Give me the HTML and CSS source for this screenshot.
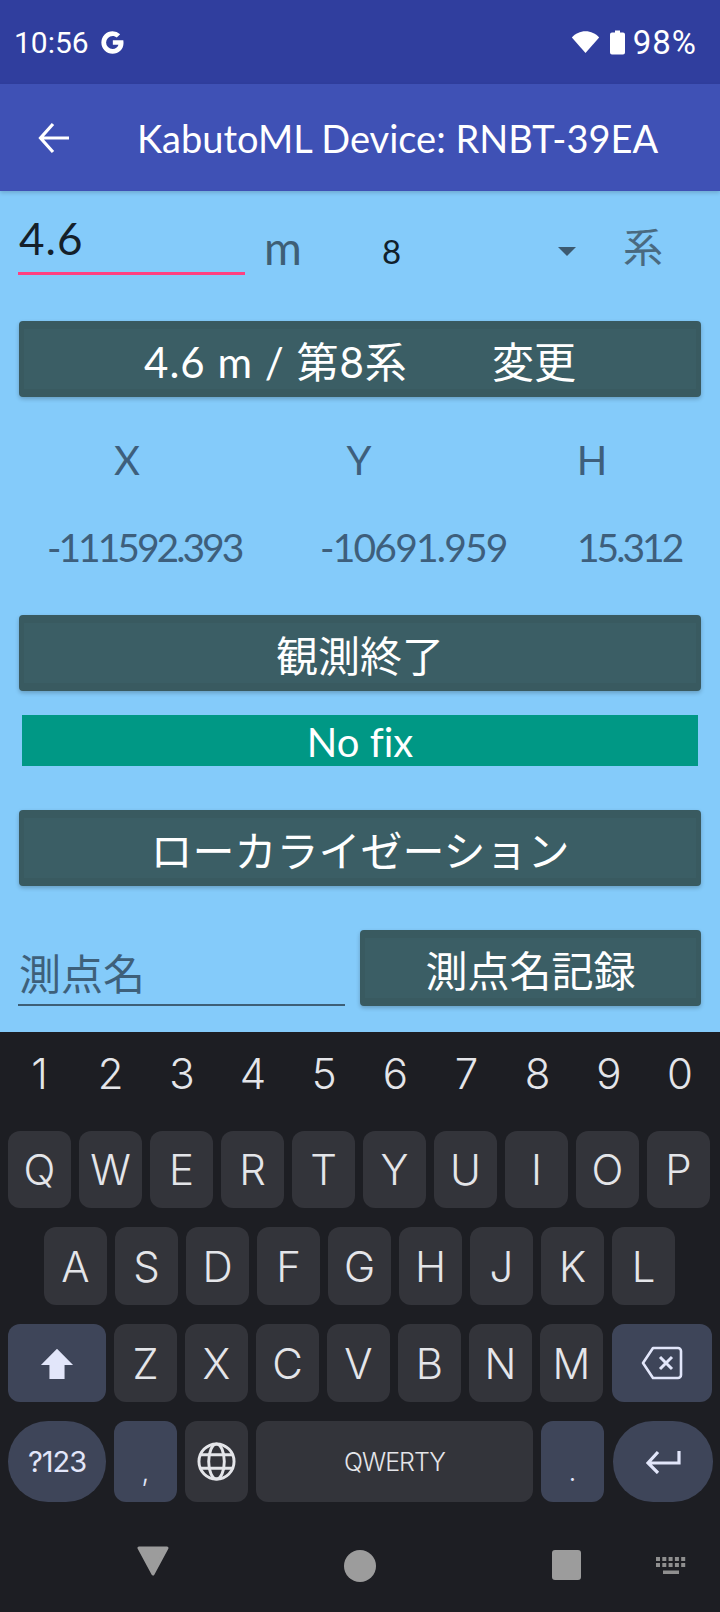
FILE: index.html
```html
<!DOCTYPE html>
<html lang="ja">
<head>
<meta charset="utf-8">
<title>KabutoML Device</title>
<link rel="stylesheet" href="styles.css">
</head>
<body>
<div class="screen">
  <header class="status">
    <div class="status-left">
      <span class="time">10:56</span>
      <svg class="g-icon" viewBox="0 0 24 24"><path d="M21.600 10H12.300v4.100h5c-.6 2.300-2.700 3.700-5.200 3.700a5.800 5.800 0 0 1 0-11.600c1.400 0 2.700.500 3.700 1.400l3-3A10 10 0 0 0 12.100 2a10 10 0 1 0 0 20c5.400 0 9.700-3.700 9.700-9.500 0-.9-.1-1.700-.2-2.500z" fill="#fff"/></svg>
    </div>
    <div class="status-right">
      <svg class="wifi" viewBox="0 0 30 24"><path d="M15 23.500 .9 7.300C4.500 3.500 9.500 1 15 1s10.500 2.500 14.100 6.300z" fill="#fff"/></svg>
      <svg class="battery" viewBox="0 0 15 24"><path d="M5 0h5v2h3a2 2 0 0 1 2 2v18a2 2 0 0 1-2 2H2a2 2 0 0 1-2-2V4a2 2 0 0 1 2-2h3z" fill="#fff"/></svg>
      <span class="pct">98%</span>
    </div>
  </header>
  <div class="appbar">
    <svg class="back" viewBox="0 0 32 32"><path d="M32 16H4M16 2 3.500 16 16 30" fill="none" stroke="#fff" stroke-width="3.200"/></svg>
    <h1 class="title">KabutoML Device: RNBT-39EA</h1>
  </div>
  <main class="content">
    <div class="settings">
      <div class="num-input">4.6</div>
      <span class="unit">m</span>
      <div class="spinner"><span class="spin-val">8</span><span class="caret"></span></div>
      <span class="kei">系</span>
    </div>
    <button class="btn btn-first"><span class="spaced">4.6 m / 第8系</span><span class="change">変更</span></button>
    <div class="coords head">
      <span class="c1">X</span><span class="c2">Y</span><span class="c3">H</span>
    </div>
    <div class="coords vals">
      <span class="c1">-111592.393</span><span class="c2">-10691.959</span><span class="c3">15.312</span>
    </div>
    <button class="btn btn-stop">観測終了</button>
    <div class="fix">No fix</div>
    <button class="btn btn-loc">ローカライゼーション</button>
    <div class="point-row">
      <div class="point-input">測点名</div>
      <button class="btn btn-rec">測点名記録</button>
    </div>
  </main>
  <section class="kbd">
    <div class="nums">
      <span>1</span><span>2</span><span>3</span><span>4</span><span>5</span><span>6</span><span>7</span><span>8</span><span>9</span><span>0</span>
    </div>
    <div class="row row-q">
      <span class="key">Q</span><span class="key">W</span><span class="key">E</span><span class="key">R</span><span class="key">T</span><span class="key">Y</span><span class="key">U</span><span class="key">I</span><span class="key">O</span><span class="key">P</span>
    </div>
    <div class="row row-a">
      <span class="key">A</span><span class="key">S</span><span class="key">D</span><span class="key">F</span><span class="key">G</span><span class="key">H</span><span class="key">J</span><span class="key">K</span><span class="key">L</span>
    </div>
    <div class="row row-z">
      <span class="key wide fn"><svg class="ico shift" viewBox="0 0 36 36"><path d="M18 3 35 20H26V35H10V20H1z" fill="#e2e6fa"/></svg></span>
      <span class="key">Z</span><span class="key">X</span><span class="key">C</span><span class="key">V</span><span class="key">B</span><span class="key">N</span><span class="key">M</span>
      <span class="key wide fn"><svg class="ico del" viewBox="0 0 42 34"><path d="M12 2H37a3 3 0 0 1 3 3V29a3 3 0 0 1-3 3H12L2 17z" fill="none" stroke="#e2e6fa" stroke-width="2.600" stroke-linejoin="round"/><path d="M19 11 31 23M31 11 19 23" stroke="#e2e6fa" stroke-width="3"/></svg></span>
    </div>
    <div class="row row-b">
      <span class="key wide fn pill sym">?123</span>
      <span class="key fn punct">,</span>
      <span class="key"><svg class="ico globe" viewBox="0 0 40 40"><g fill="none" stroke="#e4e5e9" stroke-width="3"><circle cx="20" cy="20" r="18"/><ellipse cx="20" cy="20" rx="8" ry="18"/><path d="M3.500 13h33M3.500 27h33"/></g></svg></span>
      <span class="key space">QWERTY</span>
      <span class="key fn punct">.</span>
      <span class="key wide fn pill"><svg class="ico enter" viewBox="0 0 38 24"><path d="M35 1V13H5M14 2 4 13 14 23" fill="none" stroke="#e2e6fa" stroke-width="3.200"/></svg></span>
    </div>
    <nav class="navbar">
      <svg class="nav-back" viewBox="0 0 32 30"><path d="M2 2H30L16 28z" fill="#9c9c9c" stroke="#9c9c9c" stroke-width="3" stroke-linejoin="round"/></svg>
      <span class="nav-home"></span>
      <span class="nav-recent"></span>
      <svg class="nav-kbd" viewBox="0 0 30 17"><g fill="#8f8f8f"><rect x="0" y="0" width="4" height="4"/><rect x="6.300" y="0" width="4" height="4"/><rect x="12.600" y="0" width="4" height="4"/><rect x="18.900" y="0" width="4" height="4"/><rect x="25.200" y="0" width="4" height="4"/><rect x="0" y="6" width="4" height="4"/><rect x="6.300" y="6" width="4" height="4"/><rect x="12.600" y="6" width="4" height="4"/><rect x="18.900" y="6" width="4" height="4"/><rect x="25.200" y="6" width="4" height="4"/><rect x="7" y="13.500" width="16" height="3.500"/></g></svg>
    </nav>
  </section>
</div>
</body>
</html>
```
FILE: styles.css
```css
* { box-sizing: border-box; }
html, body { margin: 0; padding: 0; }
body {
  width: 720px; height: 1612px; overflow: hidden;
  font-family: "Lato", "Noto Sans CJK JP", sans-serif;
  font-variant-ligatures: none;
}
.screen { width: 720px; height: 1612px; display: flex; flex-direction: column; background: #84cbfa; }

.status { height: 84px; flex: none; background: #303e9e; color: #fff; display: flex; justify-content: space-between; align-items: center; padding: 0 23px 0 14px; font-family: "Roboto", sans-serif; font-size: 30px; }
.status-left, .status-right { display: flex; align-items: center; }
.g-icon { width: 27px; height: 27px; margin-left: 10px; }
.wifi { width: 29px; height: 24px; }
.battery { width: 15px; height: 25px; margin-left: 10px; }
.pct { margin-left: 8px; font-size: 33px; letter-spacing: 1px; }

.appbar { height: 107px; flex: none; background: #3f51b5; display: flex; align-items: center; padding-left: 37px; box-shadow: 0 2px 4px rgba(0,0,0,.16); position: relative; }
.back { width: 32px; height: 32px; }
.title { margin: 0 0 0 68px; font-size: 38px; font-weight: 400; color: #fff; white-space: nowrap; }

.content { height: 841px; flex: none; padding: 0 19px; display: flex; flex-direction: column; }
.settings { height: 130px; flex: none; display: flex; align-items: flex-start; margin-left: -1px; }
.num-input { width: 227px; height: 84px; border-bottom: 3px solid #ff4081; font-size: 44px; letter-spacing: 1px; color: #14202a; padding: 22px 0 0 1px; line-height: 50px; }
.unit { font-size: 46px; color: #3e5f76; width: 73px; padding: 32px 0 0 19px; line-height: 50px; }
.spinner { width: 258px; height: 84px; display: flex; align-items: center; justify-content: space-between; padding: 36px 0 0 64px; }
.spin-val { font-size: 33px; color: #10202b; }
.caret { width: 0; height: 0; border-left: 9.500px solid transparent; border-right: 9.500px solid transparent; border-top: 9px solid #3c5a70; }
.kei { font-size: 40px; color: #4a6a80; margin-left: 47px; padding-top: 31px; line-height: 50px; }

.btn { display: flex; align-items: center; justify-content: center; width: 682px; height: 76px; flex: none; padding: 0; border-style: solid; border-width: 8px 5px; border-color: #395a60; border-radius: 4px; background: #3b5e65; color: #fff; font-family: inherit; font-size: 42px; box-shadow: 0 2px 4px rgba(0,0,0,.22); }
.spaced { letter-spacing: 1px; }
.change { margin-left: 84px; }
.coords { display: flex; flex: none; color: #3e5f7c; }
.coords span { display: block; text-align: center; }
.head { margin-top: 23px; height: 80px; font-size: 40px; line-height: 80px; }
.head .c1 { width: 216px; }
.head .c2 { width: 248px; }
.head .c3 { width: 218px; }
.vals { height: 113px; font-size: 39px; line-height: 94px; letter-spacing: -3px; }
.vals .c1 { width: 301px; padding-left: 28px; text-align: left; }
.vals .c2 { width: 257px; text-align: left; letter-spacing: -1.800px; }
.vals .c3 { width: 124px; text-align: left; }
.btn-stop { margin-top: 2px; }
.fix { width: 676px; height: 51px; flex: none; margin: 24px 0 0 3px; background: #009885; color: #fff; font-size: 40px; line-height: 54px; text-align: center; }
.btn-loc { margin-top: 44px; }
.point-row { display: flex; justify-content: space-between; align-items: flex-end; margin-top: 44px; margin-left: -1px; width: 683px; }
.point-input { width: 327px; height: 76px; border-bottom: 2px solid #3e5f76; color: #3e607a; font-size: 42px; line-height: 48px; padding: 20px 0 0 1px; }
.btn-rec { width: 341px; }

.kbd { flex: 1; background: #1d1e23; display: flex; flex-direction: column; font-family: "Inter", sans-serif; color: #e4e5e9; }
.nums { height: 99px; flex: none; padding: 0 4.500px 0 4px; display: flex; }
.nums span { flex: 1; text-align: center; font-size: 42px; font-weight: 300; line-height: 84px; }
.row { display: flex; gap: 8px; flex: none; padding: 0 8px; }
.key { width: 63px; height: 77px; flex: none; background: #33343a; border-radius: 12px; display: flex; align-items: center; justify-content: center; font-size: 42px; font-weight: 300; }
.row-q { gap: 8px; margin-bottom: 19px; }
.row-a { padding-left: 44px; margin-bottom: 19px; height: 78px; }
.row-a .key { height: 78px; }
.row-z { margin-bottom: 19px; height: 78px; }
.row-z .key { height: 78px; }
.row-b { height: 81px; }
.row-b .key { height: 81px; }
.wide { width: 98px; }
.row-z .wide:last-child, .row-b .wide:last-child { width: 100px; margin-left: 1px; }
.fn { background: #3e4559; color: #e2e6fa; border-radius: 12px; }
.pill { border-radius: 40px / 40px; }
.sym { font-size: 29px; font-weight: 400; letter-spacing: -1px; }
.punct { align-items: flex-end; padding-bottom: 14px; font-size: 28px; }
.space { width: 277px; font-size: 25px; font-weight: 300; letter-spacing: -1px; border-radius: 12px; }
.ico { display: block; }
.shift { width: 36px; height: 34px; }
.del { width: 42px; height: 34px; }
.globe { width: 39px; height: 39px; }
.enter { width: 38px; height: 24px; }

.navbar { flex: 1; position: relative; }
.nav-back { position: absolute; left: 137px; top: 44px; width: 32px; height: 30px; }
.nav-home { position: absolute; left: 344px; top: 48px; width: 32px; height: 32px; border-radius: 50%; background: #9c9c9c; }
.nav-recent { position: absolute; left: 552px; top: 48px; width: 29px; height: 30px; border-radius: 3px; background: #9c9c9c; }
.nav-kbd { position: absolute; left: 656px; top: 55px; width: 30px; height: 17px; }
```
